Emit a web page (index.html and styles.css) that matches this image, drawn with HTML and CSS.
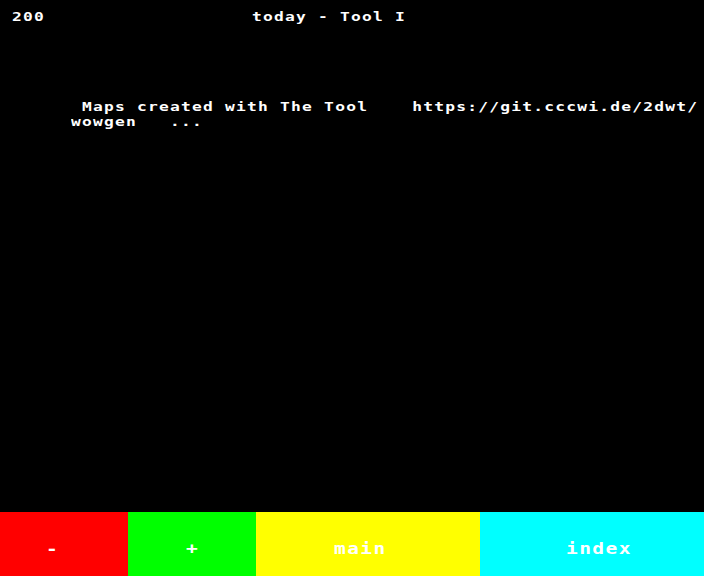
FILE: index.html
```html
<!DOCTYPE html>
<html>
<head>
<meta charset="utf-8">
<title>200 today - Tool I</title>
<link rel="stylesheet" href="styles.css">
</head>
<body>
<div class="screen">
  <main class="page">
    <header class="header">
      <span class="tt pgnum">200</span>
      <span class="tt title">today - Tool I</span>
    </header>
    <section class="content">
      <div class="line"><span class="tt"> Maps created with The Tool    https://git.cccwi.de/2dwt/</span></div>
      <div class="line"><span class="tt">wowgen   ...</span></div>
    </section>
  </main>
  <nav class="bar">
    <a class="key key-red"><span class="tt-big">-</span></a>
    <a class="key key-green"><span class="tt-big">+</span></a>
    <a class="key key-yellow"><span class="tt-big">main</span></a>
    <a class="key key-cyan"><span class="tt-big">index</span></a>
  </nav>
</div>
</body>
</html>
```
FILE: styles.css
```css
html, body {
  margin: 0;
  padding: 0;
  background: #000;
}
.screen {
  width: 704px;
  height: 576px;
  display: flex;
  flex-direction: column;
  background: #000;
  color: #fff;
  font-family: "DejaVu Sans Mono", "Liberation Mono", monospace;
  font-weight: bold;
  overflow: hidden;
}
.page {
  height: 512px;
  display: flex;
  flex-direction: column;
}
.tt {
  display: inline-block;
  font-size: 12.5px;
  line-height: 15px;
  letter-spacing: 0.94px;
  white-space: pre;
  transform: scaleX(1.3);
  transform-origin: left center;
}
.header {
  display: grid;
  grid-template-columns: 240px auto;
  padding: 9px 0 0 12px;
  height: 15px;
}
.content {
  margin-top: 72px;
  padding-left: 71px;
}
.line {
  height: 15px;
}
.bar {
  height: 64px;
  display: flex;
}
.key {
  display: flex;
  align-items: flex-start;
  padding-top: 27px;
  box-sizing: border-box;
  height: 64px;
  color: #fff;
  text-decoration: none;
}
.tt-big {
  display: inline-block;
  font-size: 15px;
  line-height: 20px;
  letter-spacing: 1.1px;
  white-space: pre;
  transform: scaleX(1.3);
  transform-origin: left center;
}
.key-red { width: 128px; background: #ff0000; padding-left: 46px; }
.key-green { width: 128px; background: #00ff00; padding-left: 58px; }
.key-yellow { width: 224px; background: #ffff00; padding-left: 78px; }
.key-cyan { width: 224px; background: #00ffff; padding-left: 86px; }
```
